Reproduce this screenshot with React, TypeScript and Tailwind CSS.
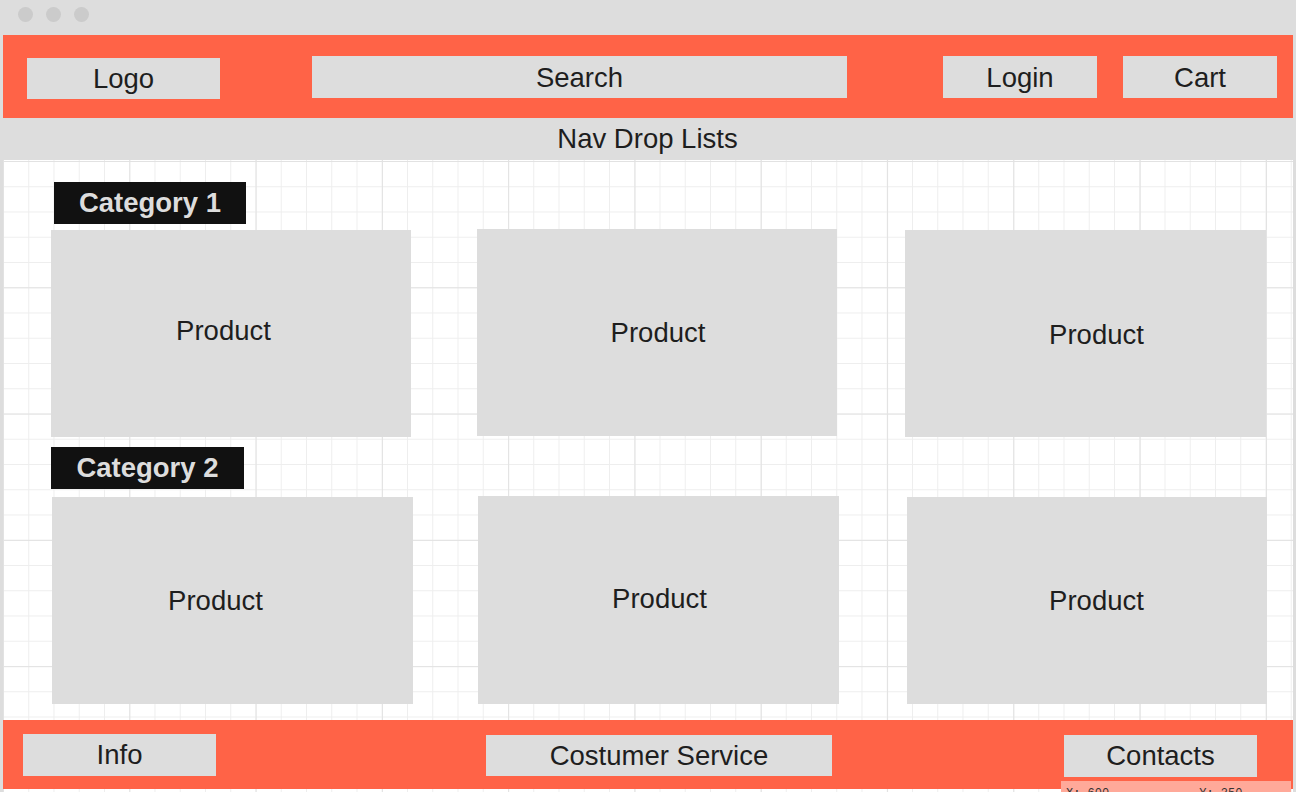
const font = { fontFamily: '"Liberation Sans", Arial, sans-serif' };

function Box({ className, label }: { className: string; label: string }) {
  return (
    <div className={`flex shrink-0 items-center justify-center bg-[#dddddd] text-[27.5px] leading-none text-[#1e1e1e] ${className}`}>
      {label}
    </div>
  );
}

function Category({ className, label }: { className: string; label: string }) {
  return (
    <div className={`flex h-[42px] shrink-0 items-center justify-center bg-[#111111] text-[27.5px] font-bold leading-none text-[#dddddd] ${className}`}>
      {label}
    </div>
  );
}

function Product({ className, textClass }: { className: string; textClass: string }) {
  return (
    <div className={`flex shrink-0 items-center justify-center bg-[#dddddd] text-[27.5px] leading-none text-[#1e1e1e] ${className}`}>
      <span className={textClass}>Product</span>
    </div>
  );
}

export default function App() {
  return (
    <div className="flex h-[792px] w-[1296px] flex-col overflow-hidden bg-[#dddddd]" style={font}>
      {/* window chrome */}
      <div className="flex h-[35px] shrink-0 items-start gap-[13px] pl-[18px] pt-[7px]">
        <span className="h-[15px] w-[15px] rounded-full bg-[#cbcbcb]" />
        <span className="h-[15px] w-[15px] rounded-full bg-[#cbcbcb]" />
        <span className="h-[15px] w-[15px] rounded-full bg-[#cbcbcb]" />
      </div>

      <div className="flex flex-1 flex-col px-[3px]">
        {/* header */}
        <header className="flex h-[83px] shrink-0 items-start bg-[#ff6347] pt-[21px]">
          <Box className="ml-[24px] mt-[2px] h-[41px] w-[193px]" label="Logo" />
          <Box className="ml-[92px] h-[42px] w-[535px] pt-[2px]" label="Search" />
          <Box className="ml-[96px] h-[42px] w-[154px] pt-[2px]" label="Login" />
          <Box className="ml-[26px] h-[42px] w-[154px] pt-[2px]" label="Cart" />
        </header>

        {/* nav */}
        <div className="mr-px flex h-[42px] shrink-0 items-center justify-center bg-[#dddddd] text-[27.5px] leading-none text-[#1e1e1e]">
          Nav Drop Lists
        </div>

        {/* canvas */}
        <main className="relative flex flex-1 flex-col bg-white bg-[linear-gradient(to_right,#e2e2e2_1px,transparent_1px),linear-gradient(to_bottom,#e2e2e2_1px,transparent_1px),linear-gradient(to_right,#eeeeee_1px,transparent_1px),linear-gradient(to_bottom,#eeeeee_1px,transparent_1px)] bg-[size:126.3px_126.3px,126.3px_126.3px,25.26px_25.26px,25.26px_25.26px] bg-[position:0_1px]">
          <Category className="ml-[51px] mt-[22px] w-[192px]" label="Category 1" />
          <div className="mt-[5px] flex items-start">
            <Product className="ml-[48px] mt-px h-[207px] w-[360px]" textClass="mb-[5px] mr-[15px]" />
            <Product className="ml-[66px] h-[207px] w-[360px]" textClass="ml-[2px]" />
            <Product className="ml-[68px] mt-px h-[207px] w-[361px]" textClass="mt-[3px] ml-[22px]" />
          </div>

          <Category className="ml-[48px] mt-[10px] w-[193px]" label="Category 2" />
          <div className="mt-[7px] flex items-start">
            <Product className="ml-[49px] mt-px h-[207px] w-[361px]" textClass="ml-[-34px] mt-px" />
            <Product className="ml-[65px] h-[208px] w-[361px]" textClass="ml-[2px] mt-[-2px]" />
            <Product className="ml-[68px] mt-px h-[207px] w-[360px]" textClass="ml-[19px] mt-px" />
          </div>

          {/* footer */}
          <footer className="mt-auto flex h-[69px] shrink-0 items-start bg-[#ff6347] pt-[14px]">
            <Box className="ml-[20px] h-[42px] w-[193px]" label="Info" />
            <Box className="ml-[270px] mt-px h-[41px] w-[346px]" label="Costumer Service" />
            <Box className="ml-[232px] mt-px h-[42px] w-[193px]" label="Contacts" />
          </footer>
          <div className="h-[3px] shrink-0" />

          {/* coordinates tooltip */}
          <div className="absolute bottom-[-8px] left-[1058px] flex h-[19px] w-[230px] gap-[90px] bg-[#ffa999] pl-[5px] pt-[7px] text-[12px] leading-none text-[#333]" style={{ fontFamily: '"Liberation Mono", monospace' }}>
            <span>X: 600</span>
            <span>Y: 350</span>
          </div>
        </main>
      </div>
    </div>
  );
}
